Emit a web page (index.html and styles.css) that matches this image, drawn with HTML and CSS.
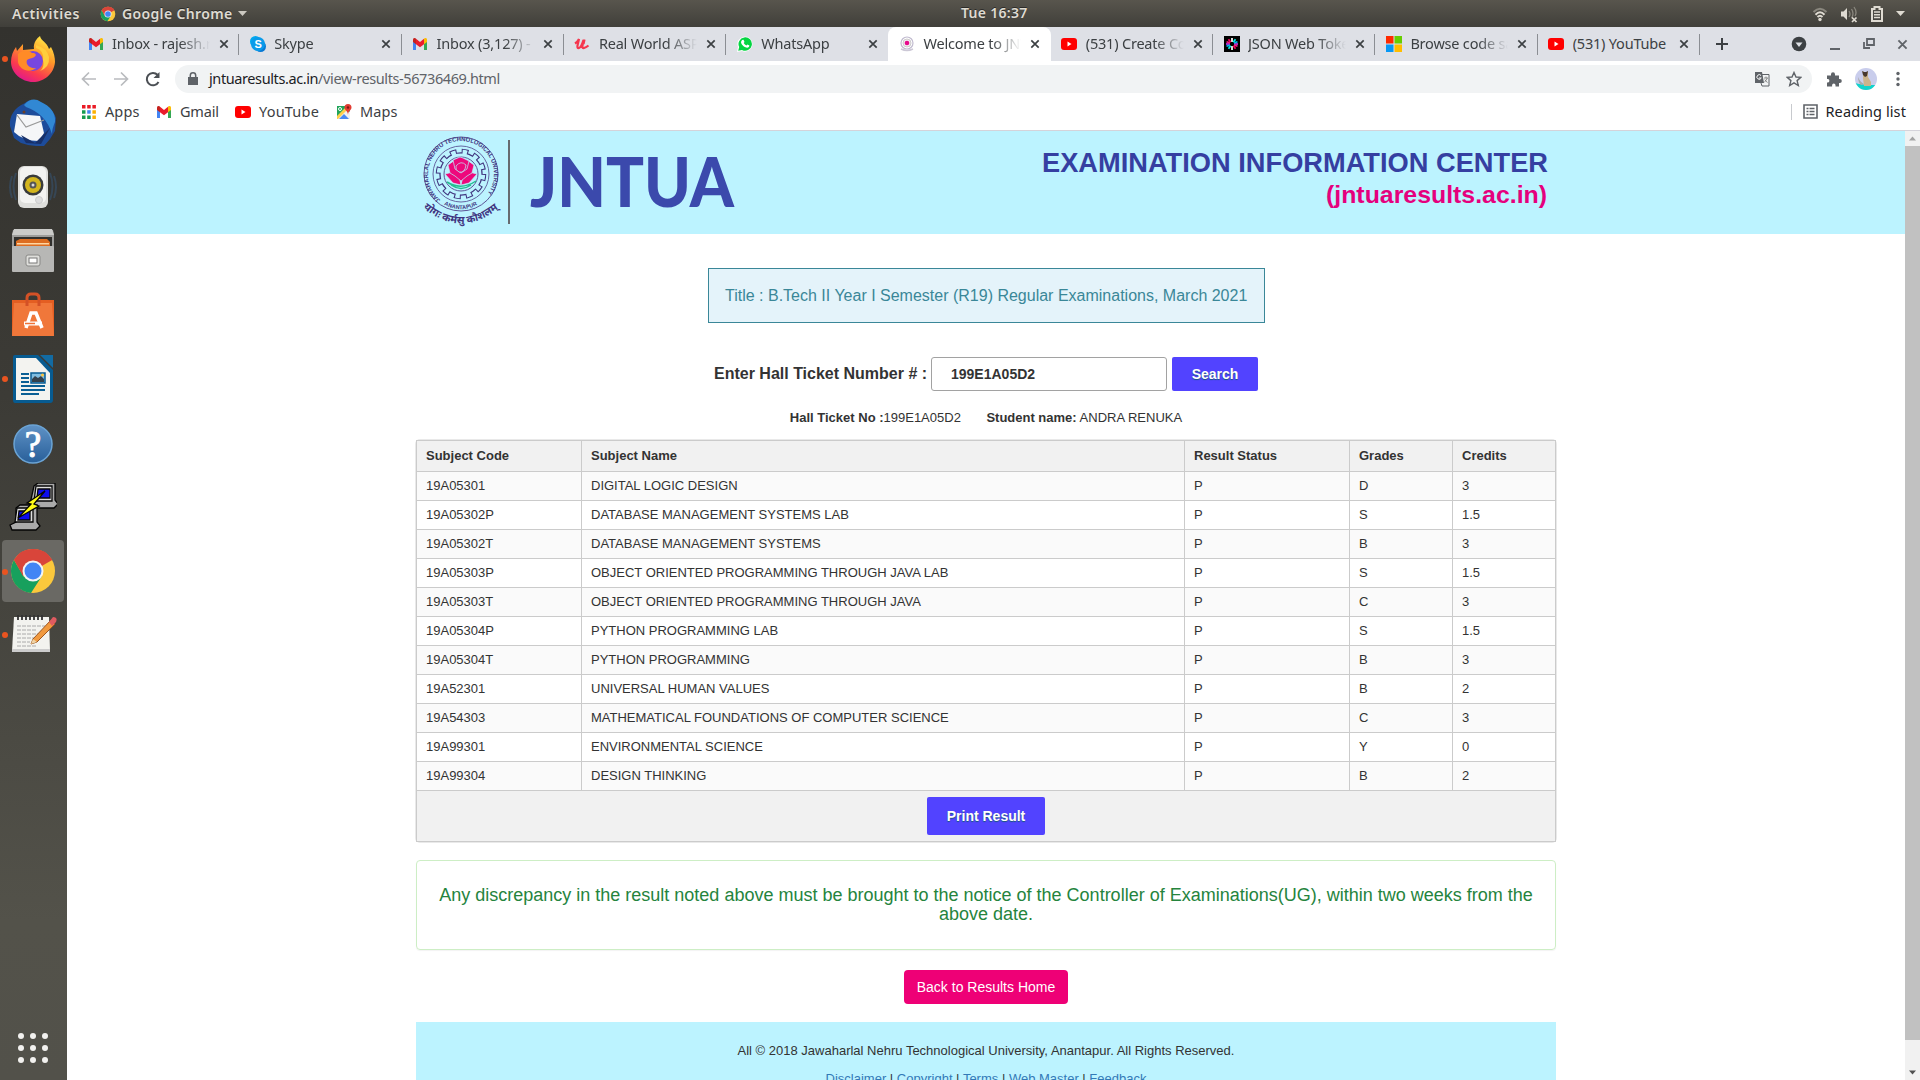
FILE: index.html
```html
<!DOCTYPE html>
<html lang="en">
<head>
<meta charset="utf-8">
<title>Welcome to JNTUA Results</title>
<link rel="stylesheet" href="styles.css">
</head>
<body>
<svg class="defs" width="0" height="0" aria-hidden="true">
  <symbol id="chrome" viewBox="0 0 48 48">
    <circle cx="24" cy="24" r="22" fill="#fbc83c"/>
    <path d="M24 24L5 13A22 22 0 0 1 43.200 13z" fill="#d9453a"/>
    <path d="M5 13A22 22 0 0 0 22 46L33 29 24 24 15 30z" fill="#17a05d"/>
    <path d="M5 13A22 22 0 0 1 43.200 13H24L14 29z" fill="#d9453a"/>
    <circle cx="24" cy="24" r="10.500" fill="#f4f4f4"/><circle cx="24" cy="24" r="8.500" fill="#4285f4"/>
  </symbol>
  <symbol id="gmail" viewBox="0 0 16 16">
    <path d="M1 3.500V14h3V6z" fill="#4285f4"/><path d="M12 6v8h3V3.500z" fill="#34a853"/>
    <path d="M1 3.500C1 2 2.600 1.500 4 2.500v5.700L1 6z" fill="#c5221f"/><path d="M15 3.500c0-1.500-1.600-2-3-1v5.700L15 6z" fill="#fbbc04"/>
    <path d="M4 2.700l4 3.200 4-3.200v5.500l-4 3-4-3z" fill="#ea1c2c"/>
  </symbol>
  <symbol id="youtube" viewBox="0 0 16 16"><rect y="2" width="16" height="12" rx="3" fill="#f00"/><path d="M6.500 5.500v5l4-2.500z" fill="#fff"/></symbol>
  <symbol id="close" viewBox="0 0 10 10"><path d="M1.300 1.300l7.400 7.400M8.700 1.300L1.300 8.700" stroke="currentColor" stroke-width="1.700"/></symbol>
</svg>

<header class="topbar">
  <div class="topbar-left">
    <span class="activities">Activities</span>
    <svg class="i16" viewBox="0 0 48 48"><use href="#chrome"/></svg>
    <span class="app-name">Google Chrome</span>
    <svg class="caret" width="9" height="5"><path d="M0 0h9L4.500 5z" fill="#ccc9c1"/></svg>
  </div>
  <span class="clock">Tue 16:37</span>
  <div class="topbar-right">
    <svg width="16" height="16" viewBox="0 0 16 16" fill="none" stroke-width="2"><path d="M1.500 6Q8-.500 14.500 6" stroke="#8a877e"/><path d="M3.500 8.700Q8 4 12.500 8.700" stroke="#dfdbd2"/><path d="M5.500 11Q8 8.500 10.500 11" stroke="#dfdbd2"/><circle cx="8" cy="13.500" r="1.700" fill="#dfdbd2"/></svg>
    <svg width="18" height="18" viewBox="0 0 18 18" fill="none"><path d="M1 6.500h2.500L7 3v12l-3.500-3.500H1z" fill="#dfdbd2"/><path d="M9 6q2 3 0 6M11.500 4q3 4.500 0 9M14 2q3.500 5 1 9" stroke="#8a877e" stroke-width="1.300"/><path d="M12 12.500l4.500 4.500m0-4.500L12 17" stroke="#dfdbd2" stroke-width="1.700"/></svg>
    <svg width="14" height="18" viewBox="0 0 14 18"><path d="M2 4h2.500V2h5v2H12v12H2z" fill="none" stroke="#dfdbd2" stroke-width="2"/><path d="M4 7h6M4 9.700h6M4 12.400h6" stroke="#dfdbd2" stroke-width="1.500"/></svg>
    <svg width="9" height="5"><path d="M0 0h9L4.500 5z" fill="#dfdbd2"/></svg>
  </div>
</header>

<div class="desktop">
<nav class="dock">
  <div class="slot running"><svg viewBox="0 0 48 48">
    <defs><linearGradient id="fx" x1=".8" y1="0" x2=".3" y2="1"><stop offset="0" stop-color="#fff04a"/><stop offset=".4" stop-color="#ff9a28"/><stop offset=".75" stop-color="#fb3b4e"/><stop offset="1" stop-color="#df1690"/></linearGradient></defs>
    <path d="M25 14C24 8 28 3 31 1c1 5 7 6 9 13l2-2c3 5 4 11 4 15-1 12-11 20-22 20S2 38 2 27c0-6 2-11 5-15l1 4 6-7 0 6z" fill="url(#fx)"/>
    <circle cx="24" cy="26" r="10" fill="#7747df"/><path d="M9 19c4-4 10-4 14-1 2 0 3 0 4 2-2 4-7 3-9 5-2 5 4 9 9 8-7 6-17 1-18-6z" fill="#ff8b27"/><path d="M27 13q8 2 7 12 2 7-3 11 10-4 9-14-2-9-13-12z" fill="#ffce3d"/></svg></div>
  <div class="slot"><svg viewBox="0 0 48 48"><path d="M24 1q-5 0-8 3C5 9 0 17 1 27l4 12 7 5 7 2 8 1h8l6-7 5-8 1-13Q42 5 24 1z" fill="#1d4c9b"/><path d="M15 6Q23-3 32 3q15 7 14 20-3 7-3 12-6-20-26-27z" fill="#3188d4"/><path d="M8 15l23 2 4 17-5 8q-16 0-25-9z" fill="#f5f6f8"/><path d="M8 16l9 12 18-7" fill="none" stroke="#999" stroke-width="1.200"/><path d="M12 36l14 8 15-15-9 16-15-1z" fill="#173069"/><circle cx="15" cy="13" r="1.500" fill="#6b3e27"/></svg></div>
  <div class="slot"><svg viewBox="0 0 48 48"><path d="M7 10q-5 13 0 27M3 13q-4 11 0 22M41 10q5 13 0 27M45 13q4 11 0 22" fill="none" stroke="#364655" stroke-width="2"/><rect x="9" y="3" width="30" height="42" rx="6" fill="#dededb"/><rect x="11" y="4" width="26" height="36" rx="5" fill="#f3f3f1"/><circle cx="24" cy="22" r="10.500" fill="#393b3b"/><circle cx="24" cy="22" r="8" fill="#d3b51d"/><circle cx="24" cy="22" r="3.500" fill="#555"/><circle cx="24" cy="22" r="1.500" fill="#ddd"/><circle cx="30" cy="37" r="3.500" fill="#ddd" stroke="#ccc"/></svg></div>
  <div class="slot"><svg viewBox="0 0 48 48"><path d="M4 3h40l1 5v36H3V8z" fill="#9d9d9b"/><path d="M5 2h38l2 6H3z" fill="#cbcbc9"/><path d="M5 10h38v10H5z" fill="#31302d"/><path d="M7 14l4-2h27l3 3v5H7z" fill="#dd6d21"/><path d="M8 16h32v1.500H8z" fill="#ffd6a2"/><rect x="3" y="19" width="42" height="26" rx="1" fill="#b7b7b5"/><rect x="17" y="28" width="14" height="11" rx="2" fill="#dededb" stroke="#898987"/><rect x="20" y="31" width="8" height="5" fill="#fff" stroke="#777"/></svg></div>
  <div class="slot"><svg viewBox="0 0 48 48"><path d="M3 9h42v36H3z" fill="#e45e22"/><path d="M5 12h38l2 33H3z" fill="#f0773a"/><path d="M18 15V7q0-4 4-4h4q4 0 4 4v8" fill="none" stroke="#d35126" stroke-width="3"/><path d="M17 37l5-15h5l6 15" fill="none" stroke="#fff" stroke-width="3.500"/><path d="M15 32.500h18" stroke="#fff" stroke-width="4"/><path d="M16 32.500h10" stroke="#ef7237" stroke-width="1.500"/></svg></div>
  <div class="slot running"><svg viewBox="0 0 48 48"><path d="M6 0h23l15 15v30q0 3-3 3H6q-2 0-2-3V2q0-2 2-2z" fill="#075b91"/><path d="M7 3h20l14 15v27H7z" fill="#f3f3f0"/><path d="M31 0h13v13z" fill="#126ba3"/><path d="M12 19h8M12 23h8M12 27h8M12 31h24M12 35h24M12 39h18" stroke="#0a5f95" stroke-width="2"/><path d="M22 18h14v10H22z" fill="#80bde0" stroke="#075b91" stroke-width="1.500"/><path d="M23 27v-3l3-3 3 2 3-2 3 3v3z" fill="#35414c"/><circle cx="33.500" cy="20" r="1.500" fill="#fdc43b"/></svg></div>
  <div class="slot"><svg viewBox="0 0 48 48"><defs><linearGradient id="help" x2="0" y2="1"><stop stop-color="#5f92c6"/><stop offset="1" stop-color="#285f99"/></linearGradient></defs><circle cx="24" cy="25" r="19" fill="url(#help)" stroke="#6ba4d5" stroke-width="1.500"/><text x="24" y="38" class="help-mark">?</text></svg></div>
  <div class="slot"><svg viewBox="0 0 48 48"><g stroke="#050505" stroke-width="1.300"><path d="M25 3l4-3h17v17l3 4-4 4H23l-2-4z" fill="#aaa"/><path d="M27 3h16v15H25z" fill="#ddd"/><path d="M29 6h12v9H28z" fill="#0c0cec"/><path d="M7 25l4-3h17v17l3 4-4 4H3l-2-5 6-3z" fill="#aaa"/><path d="M8 25h16v14H6z" fill="#ddd"/><path d="M10 28h11v9H9z" fill="#0c0cec"/><path d="M36 8L18 20l4 1-13 14 21-12-5-2z" fill="#fffb16"/></g></svg></div>
  <div class="slot running active"><svg viewBox="0 0 48 48"><use href="#chrome"/></svg></div>
  <div class="slot running"><svg viewBox="0 0 48 48"><path d="M5 6h35l1 34H3z" fill="#f3f3ef"/><path d="M3 38h38v3H3z" fill="#ccc"/><path d="M9 4v5m4-5v5m4-5v5m4-5v5m4-5v5m4-5v5m4-5v5" stroke="#333" stroke-width="1.800"/><path d="M8 15h28M8 19h20M8 23h25M8 27h17M8 31h13M8 35h20" stroke="#aaa" stroke-dasharray="4 1"/><path d="M24 28L42 9l4 4-18 18-6 2z" fill="#f19a3f" stroke="#9d5721"/><path d="M40 11l4-5q5 0 3 5l-4 4z" fill="#df5b61"/><path d="M22 33l2-5 4 3z" fill="#f0d4a5"/></svg></div>
  <div class="slot apps"><svg viewBox="0 0 48 48" fill="#f2f1ef"><circle cx="12" cy="12" r="3"/><circle cx="24" cy="12" r="3"/><circle cx="36" cy="12" r="3"/><circle cx="12" cy="24" r="3"/><circle cx="24" cy="24" r="3"/><circle cx="36" cy="24" r="3"/><circle cx="12" cy="36" r="3"/><circle cx="24" cy="36" r="3"/><circle cx="36" cy="36" r="3"/></svg></div>
</nav>

<main class="browser">
  <div class="tabs">
    <div class="tab"><svg class="i16"><use href="#gmail"/></svg><span>Inbox - rajesh.r</span><svg class="x"><use href="#close"/></svg></div>
    <div class="tab"><svg class="i16" viewBox="0 0 16 16"><circle cx="5.500" cy="5.500" r="5.500" fill="#00a9ef"/><circle cx="10.500" cy="10.500" r="5.500" fill="#0878d4"/><circle cx="8" cy="8" r="7" fill="#0a9bea"/><text x="8" y="12" class="skype-s">S</text></svg><span>Skype</span><svg class="x"><use href="#close"/></svg></div>
    <div class="tab"><svg class="i16"><use href="#gmail"/></svg><span>Inbox (3,127) - r</span><svg class="x"><use href="#close"/></svg></div>
    <div class="tab"><svg class="i16" viewBox="0 0 16 16" fill="none" stroke="#f5374e" stroke-width="2.200"><path d="M1 7.500Q3.500 6 5 3L3.500 9.500Q3 12.500 5 12T9.500 4L8.500 9.500Q8 12.500 10 12T14.500 9.500M10.500 3.500L9.500 8"/></svg><span>Real World ASP</span><svg class="x"><use href="#close"/></svg></div>
    <div class="tab before-active"><svg class="i16" viewBox="0 0 16 16"><path d="M0 16l1-5A7.500 7.500 0 1 1 5 15z" fill="#fff"/><path d="M1.200 14.800l1-3.800A6.700 6.700 0 1 1 5 13.900z" fill="#05d542"/><path d="M5 4l1.500-.3 1 2.300-.8 1q1 1.800 2.700 2.400l1-1 2 1q0 2-2 2.300C7 11.700 4 8 4 6z" fill="#fff"/></svg><span>WhatsApp</span><svg class="x"><use href="#close"/></svg></div>
    <div class="tab current"><svg class="i16" viewBox="0 0 16 16"><circle cx="8" cy="7" r="6" fill="#fff" stroke="#c1bbcf" stroke-width="1.200"/><circle cx="8" cy="7" r="4" fill="#f4e6ef" stroke="#ccc"/><circle cx="8" cy="7" r="2.300" fill="#e60b8b"/><path d="M2 13q6 3 12 0" fill="none" stroke="#ccc8d6" stroke-width="1.500"/></svg><span>Welcome to JNT</span><svg class="x"><use href="#close"/></svg></div>
    <div class="tab"><svg class="i16"><use href="#youtube"/></svg><span>(531) Create Co</span><svg class="x"><use href="#close"/></svg></div>
    <div class="tab"><svg class="i16" viewBox="0 0 16 16"><path d="M0 0h16v16H0z"/><g stroke-width="1.700"><path d="M8 2v4M8 10v4" stroke="#fff"/><path d="M2 8h4M10 8h4" stroke="#d63aff"/><path d="M4.500 3.200l2.200 3.100M9.300 9.700l2.200 3.100" stroke="#fb015b"/><path d="M11.500 3.200L9.300 6.300M6.700 9.700l-2.200 3.100" stroke="#00f2e6"/><path d="M2.500 5.800l3.300 1.100M10.200 9.100l3.300 1.100" stroke="#f31b7b"/><path d="M13.500 5.800l-3.300 1.100M5.800 9.100l-3.300 1.100" stroke="#00b9f1"/></g></svg><span>JSON Web Toke</span><svg class="x"><use href="#close"/></svg></div>
    <div class="tab"><svg class="i16" viewBox="0 0 16 16"><path d="M0 0h7.500v7.500H0z" fill="#ff2a00"/><path d="M8.500 0H16v7.500H8.500z" fill="#66ce00"/><path d="M0 8.500h7.500V16H0z" fill="#0798f5"/><path d="M8.500 8.500H16V16H8.500z" fill="#ffbd00"/></svg><span>Browse code sa</span><svg class="x"><use href="#close"/></svg></div>
    <div class="tab"><svg class="i16"><use href="#youtube"/></svg><span class="full">(531) YouTube</span><svg class="x"><use href="#close"/></svg></div>
    <svg class="plus" width="14" height="14"><path d="M7 1v12M1 7h12" stroke="#3c4043" stroke-width="2"/></svg>
    <div class="window-buttons">
      <svg width="16" height="16"><circle cx="8" cy="8" r="7.300" fill="#3c4043"/><path d="M4.500 6.500h7L8 11z" fill="#dee1e6"/></svg>
      <svg width="12" height="14"><path d="M1 12h10" stroke="#5f6368" stroke-width="2"/></svg>
      <svg width="12" height="12" fill="none" stroke="#5f6368" stroke-width="1.800"><path d="M4 1h7v6H4zM1 4v6h6"/></svg>
      <svg width="11" height="11" viewBox="0 0 10 10" class="window-close"><use href="#close"/></svg>
    </div>
  </div>

  <div class="toolbar">
    <svg class="nav" viewBox="0 0 16 16"><path d="M15 8H2M8 1.500L1.500 8 8 14.500"/></svg>
    <svg class="nav" viewBox="0 0 16 16"><path d="M1 8h13M8 1.500L14.500 8 8 14.500"/></svg>
    <svg class="nav reload" viewBox="0 0 16 16"><path d="M13.500 11A6.200 6.200 0 1 1 12.500 3.800"/><path d="M14.500 1v6h-6z" fill="#4b4f54" stroke="none"/></svg>
    <div class="omnibox">
      <svg width="10" height="13" viewBox="0 0 10 13"><path d="M0 5h10v8H0z" fill="#5f6368"/><path d="M2.300 6V3.500a2.700 2.700 0 0 1 5.400 0V6" fill="none" stroke="#5f6368" stroke-width="1.500"/></svg>
      <span class="url"><b>jntuaresults.ac.in</b>/view-results-56736469.html</span>
      <svg class="i16" viewBox="0 0 16 16"><path d="M1 1h7l2 11H1z" fill="#5f6368"/><path d="M8 3.500h7V15H8l-1-3" fill="none" stroke="#5f6368"/><path d="M7 4.500a2.300 2.300 0 1 0 .3 2.500H5" fill="none" stroke="#fff"/><path d="M10 7h4M12 5.500V7M13.300 7q-1 3-3 4M10.800 8.500q1 2 2.800 3" fill="none" stroke="#777" stroke-width=".8"/></svg>
      <svg class="i16" viewBox="0 0 16 16"><path d="M8 1.500l2 4.500 4.800.4-3.700 3.200 1.200 4.900L8 11.900l-4.300 2.600 1.200-4.900L1.200 6.400 6 6z" fill="none" stroke="#5f6368" stroke-width="1.400"/></svg>
    </div>
    <svg class="i16" viewBox="0 0 16 16"><path d="M1 4.500h4V3.300a2 2 0 0 1 4 0v1.200h4V8h.800a2 2 0 0 1 0 4H13v3.500H9.500v-1.200a1.700 1.700 0 0 0-3.400 0v1.200H1v-4h1a1.800 1.800 0 0 0 0-3.500H1z" fill="#5f6368"/></svg>
    <svg class="avatar" viewBox="0 0 22 22"><defs><clipPath id="round"><circle cx="11" cy="11" r="11"/></clipPath></defs><g clip-path="url(#round)"><path d="M0 0h22v22H0z" fill="#c9cdec"/><path d="M0 15q7 2 22 2v5H0z" fill="#12d4cc"/><path d="M3 9q2 5 6 7l-3 1q-3-3-3-8z" fill="#aaa"/><path d="M8 3l2 2h2l1-2v6l3 5v4H9l-1-8z" fill="#cbb48c"/><path d="M7 3l2 1h2l2-1-1 5-2 1-2-2z" fill="#47382e"/></g></svg>
    <svg width="4" height="16"><g fill="#5f6368"><circle cx="2" cy="2.500" r="1.700"/><circle cx="2" cy="8" r="1.700"/><circle cx="2" cy="13.500" r="1.700"/></g></svg>
  </div>

  <div class="bookmarks">
    <svg width="14" height="14" viewBox="0 0 14 14"><g fill="#ea1b25"><path d="M0 0h3.500v3.500H0zM5.200 0h3.500v3.500H5.200zM10.400 0h3.500v3.500h-3.500z"/></g><path d="M0 5.200h3.500v3.500H0zM0 10.400h3.500v3.500H0zM5.200 10.400h3.500v3.500H5.200z" fill="#159c50"/><path d="M5.200 5.200h3.500v3.500H5.200z" fill="#4285f4"/><path d="M10.400 5.200h3.500v3.500h-3.500zM10.400 10.400h3.500v3.500h-3.500z" fill="#fbb000"/></svg><span class="bm-apps">Apps</span>
    <svg class="i16"><use href="#gmail"/></svg><span class="bm-gmail">Gmail</span>
    <svg class="i16"><use href="#youtube"/></svg><span class="bm-youtube">YouTube</span>
    <svg class="i16" viewBox="0 0 16 16"><path d="M1 2h13v13H1z" fill="#22a45a"/><path d="M1 15L11 5l3 3v7z" fill="#f1f1f1"/><path d="M3 15l5-5 5 5z" fill="#4a8af4"/><path d="M1 12L11 2l2 2L2 15H1z" fill="#ffd04c"/><path d="M12 0a3.500 3.500 0 0 1 3.500 3.500C15.500 6 12 7 12 11c0-4-3.500-5-3.500-7.500A3.500 3.500 0 0 1 12 0z" fill="#e23c32"/><circle cx="12" cy="3.500" r="1.200" fill="#811a15"/><circle cx="4" cy="5" r="1.500" fill="none" stroke="#fff"/></svg><span>Maps</span>
    <div class="reading"><svg width="15" height="15" viewBox="0 0 15 15"><path d="M1 1h13v13H1z" fill="none" stroke="#5f6368" stroke-width="1.600"/><path d="M3.500 4.500h2M3.500 7.500h2M3.500 10.500h2M6.500 4.500h5M6.500 7.500h5M6.500 10.500h5" stroke="#5f6368" stroke-width="1.300"/></svg><span>Reading list</span></div>
  </div>

  <div class="viewport">
    <div class="page">
      <div class="banner"><div class="container banner-row">
        <svg width="330" height="103" viewBox="0 0 330 103">
          <defs><path id="ring" d="M24.500 68.900A33 33 0 1 1 65.500 68.900"/><path id="ring-low" d="M28 73.500Q45 83 62 73.500"/><path id="motto-arc" d="M7 77Q45 108 83 77"/></defs>
          <circle cx="45" cy="43" r="37" fill="none" stroke="#5b5596"/>
          <circle cx="45" cy="43" r="28" fill="none" stroke="#5b5596" stroke-width=".9"/>
          <!-- twelve-tooth cog -->
          <g fill="none"><circle cx="45" cy="43" r="22" stroke="#40357f" stroke-width="6.500" stroke-dasharray="6.500 5.020"/><circle cx="45" cy="43" r="20.500" stroke="#40357f" stroke-width="2.400"/><circle cx="45" cy="43" r="22" stroke="#bcf3ff" stroke-width="4.400" stroke-dasharray="4.500 7.020" stroke-dashoffset="-1"/><circle cx="45" cy="43" r="18.200" stroke="#bcf3ff" stroke-width="4.400"/><circle cx="45" cy="43" r="17" stroke="#5b5596"/></g>
          <text class="ring-text"><textPath href="#ring" textLength="154">JAWAHARLAL NEHRU TECHNOLOGICAL UNIVERSITY</textPath></text>
          <text class="ring-text low"><textPath href="#ring-low" textLength="35">ANANTAPUR</textPath></text>
          <g fill="#ee087c" stroke="#bcf3ff" stroke-width=".7"><path d="M29 43l8-2 6 4 2 9-8-2z"/><path d="M61 43l-8-2-6 4-2 9 8-2z"/><path d="M32 34l7-5 6 2 6-2 7 5-2 8-5 3-6 5-6-5-5-3z"/><path d="M37 29l7-3 3 1 6 3-2 8-6 4-6-4z"/><path d="M40 35q5-6 10-1-1 8-7 7-4-2-3-6z"/></g>
          <path d="M31 51q14 9 29-1M35 54q10 7 20 0" fill="none" stroke="#24bd91" stroke-width="1.500"/>
          <text class="motto"><textPath href="#motto-arc" textLength="83">योगः कर्मसु कौशलम्</textPath></text>
          <path d="M93 9v84" stroke="#666b70" stroke-width="2"/>
          <text class="brand" x="114" y="75.500" textLength="204" lengthAdjust="spacingAndGlyphs">JNTUA</text>
        </svg>
        <svg width="530" height="103" viewBox="0 0 530 103">
          <text class="eic" x="16" y="41" textLength="506" lengthAdjust="spacingAndGlyphs">EXAMINATION INFORMATION CENTER</text>
          <text class="site" x="300" y="72" textLength="221" lengthAdjust="spacingAndGlyphs">(jntuaresults.ac.in)</text>
        </svg>
      </div></div>
      <div class="container content">
        <div class="title-box">Title : B.Tech II Year I Semester (R19) Regular Examinations, March 2021</div>
        <form class="search"><label for="ht">Enter Hall Ticket Number # :</label><input id="ht" value="199E1A05D2"><button type="button" class="btn">Search</button></form>
        <div class="student"><span><b>Hall Ticket No :</b>199E1A05D2</span><span><b>Student name:</b> ANDRA RENUKA</span></div>
        <table>
          <colgroup><col class="c-code"><col class="c-name"><col class="c-code"><col class="c-small"><col class="c-small"></colgroup>
          <thead><tr><th>Subject Code</th><th>Subject Name</th><th>Result Status</th><th>Grades</th><th>Credits</th></tr></thead>
          <tbody>
            <tr><td>19A05301</td><td>DIGITAL LOGIC DESIGN</td><td>P</td><td>D</td><td>3</td></tr>
            <tr><td>19A05302P</td><td>DATABASE MANAGEMENT SYSTEMS LAB</td><td>P</td><td>S</td><td>1.5</td></tr>
            <tr><td>19A05302T</td><td>DATABASE MANAGEMENT SYSTEMS</td><td>P</td><td>B</td><td>3</td></tr>
            <tr><td>19A05303P</td><td>OBJECT ORIENTED PROGRAMMING THROUGH JAVA LAB</td><td>P</td><td>S</td><td>1.5</td></tr>
            <tr><td>19A05303T</td><td>OBJECT ORIENTED PROGRAMMING THROUGH JAVA</td><td>P</td><td>C</td><td>3</td></tr>
            <tr><td>19A05304P</td><td>PYTHON PROGRAMMING LAB</td><td>P</td><td>S</td><td>1.5</td></tr>
            <tr><td>19A05304T</td><td>PYTHON PROGRAMMING</td><td>P</td><td>B</td><td>3</td></tr>
            <tr><td>19A52301</td><td>UNIVERSAL HUMAN VALUES</td><td>P</td><td>B</td><td>2</td></tr>
            <tr><td>19A54303</td><td>MATHEMATICAL FOUNDATIONS OF COMPUTER SCIENCE</td><td>P</td><td>C</td><td>3</td></tr>
            <tr><td>19A99301</td><td>ENVIRONMENTAL SCIENCE</td><td>P</td><td>Y</td><td>0</td></tr>
            <tr><td>19A99304</td><td>DESIGN THINKING</td><td>P</td><td>B</td><td>2</td></tr>
          </tbody>
          <tfoot><tr><td colspan="5"><button type="button" class="btn print">Print Result</button></td></tr></tfoot>
        </table>
        <div class="notice">Any discrepancy in the result noted above must be brought to the notice of the Controller of Examinations(UG), within two weeks from the above date.</div>
        <a class="back">Back to Results Home</a>
        <footer>
          <p>All © 2018 Jawaharlal Nehru Technological University, Anantapur. All Rights Reserved.</p>
          <p><a>Disclaimer</a> | <a>Copyright</a> | <a>Terms</a> | <a>Web Master</a> | <a>Feedback</a></p>
        </footer>
      </div>
    </div>
    <div class="scrollbar">
      <svg width="15" height="15"><path d="M4 9.500h7L7.500 5.500z" fill="#a3a3a3"/></svg>
      <div class="thumb"></div>
      <svg width="15" height="15"><path d="M4 5.500h7L7.500 9.500z" fill="#505050"/></svg>
    </div>
  </div>
</main>
</div>
</body>
</html>
```
FILE: styles.css
```css
* { box-sizing: border-box; }
body { margin: 0; width: 1920px; height: 1080px; overflow: hidden; display: flex; flex-direction: column; font-family: "Noto Sans", "Open Sans", sans-serif; background: #fff; }
.defs { display: none; }
svg { flex: none; display: block; }
.i16 { width: 16px; height: 16px; }

/* desktop panel */
.topbar { flex: none; height: 27px; display: grid; grid-template-columns: 961px auto 1fr; align-items: center; padding-right: 15px; background: linear-gradient(#58554d, #403f3a); color: #dfdbd2; font-size: 14px; font-weight: 600; line-height: 25px; text-shadow: 0 -1px #2c2b28; }
.topbar-left { display: flex; align-items: center; padding-left: 12px; }
.activities { width: 88px; letter-spacing: .55px; }
.app-name { margin-left: 6px; width: 116px; letter-spacing: .35px; white-space: nowrap; }
.clock { white-space: nowrap; letter-spacing: .3px; padding-bottom: 2px; }
.topbar-right { display: flex; align-items: center; justify-content: flex-end; gap: 12px; }

.desktop { flex: 1; min-height: 0; display: flex; }
.dock { width: 67px; display: flex; flex-direction: column; background: linear-gradient(#33322e, #3c3b36 35%, #53524a 85%, #52514a); }
.slot { position: relative; height: 64px; flex: none; padding: 8px 10px 8px 9px; }
.slot svg { width: 48px; height: 48px; }
.running::before { content: ""; position: absolute; left: 2px; top: 29px; width: 6px; height: 6px; border-radius: 50%; background: #e95420; }
.active { width: 62px; height: 62px; margin: 1px 0 1px 2px; padding: 7px; background: #6a6964; border-radius: 4px; }
.active::before { left: 0; }
.apps { margin-top: auto; }
.help-mark { font: 37px "Liberation Serif", serif; fill: #fff; stroke: #fff; text-anchor: middle; }

/* browser frame */
.browser { flex: 1; min-width: 0; display: flex; flex-direction: column; }
.tabs { flex: none; height: 34px; display: flex; align-items: center; padding-left: 10px; background: #dee0e6; color: #3c4043; }
.tab { position: relative; width: 162.300px; height: 34px; flex: none; display: flex; align-items: center; padding: 0 10.500px 0 10.500px; font-size: 14.500px; letter-spacing: -.2px; }
.tab::after { content: ""; position: absolute; right: 0; top: 7px; width: 1px; height: 21px; background: #8b8e93; }
.tab span { margin: 0 0 2px 8.500px; width: 100px; overflow: hidden; white-space: nowrap; line-height: 24px; mask-image: linear-gradient(90deg, #000 68%, transparent 98%); }
.tab span.full { mask-image: none; }
.tab .x { width: 10px; height: 10px; margin-left: auto; }
.tab.current { background: #fff; border-radius: 8px 8px 0 0; }
.tab.current::after, .before-active::after { display: none; }
.plus { margin-left: 15px; }
.window-buttons { margin: 0 12px 0 auto; display: flex; align-items: center; gap: 22px; color: #5f6368; }
.skype-s { font: bold 11px "Liberation Sans", sans-serif; fill: #fff; text-anchor: middle; }
.toolbar { flex: none; height: 37px; display: flex; align-items: center; padding: 0 20px 2px 14px; }
.nav { width: 16px; height: 16px; margin-right: 16px; fill: none; stroke: #b9bbbe; stroke-width: 1.700; }
.reload { stroke: #4b4f54; stroke-width: 2; margin-right: 14px; }
.omnibox { height: 28px; flex: 1; margin-right: 14px; padding: 0 10px 0 13px; display: flex; align-items: center; gap: 16px; background: #f1f3f4; border-radius: 14px; }
.url { flex: 1; margin: 0 0 2px -5px; color: #5f6368; font-size: 14.500px; letter-spacing: -.4px; }
.url b { font-weight: 400; color: #202124; }
.avatar { width: 22px; height: 22px; margin: 0 19px 0 13px; }
.bookmarks { flex: none; height: 33px; display: flex; align-items: center; padding: 0 14px 5px 15px; border-bottom: 1px solid #d5d3da; color: #3c4043; font-size: 14.500px; letter-spacing: .1px; }
.bookmarks span { padding-bottom: 2px; }
.bookmarks > span { margin-left: 8px; white-space: nowrap; }
.bookmarks > .bm-apps { margin-left: 9px; width: 51px; }
.bookmarks > .bm-gmail { width: 55px; letter-spacing: -.2px; }
.bookmarks > .bm-youtube { width: 77px; letter-spacing: .2px; }
.reading { margin-left: auto; display: flex; align-items: center; gap: 8px; padding-left: 11px; border-left: 1px solid #c8cace; height: 16px; color: #202124; white-space: nowrap; }

/* results page */
.viewport { flex: 1; min-height: 0; display: flex; font-family: "Liberation Sans", Arial, sans-serif; font-size: 13px; color: #333; }
.page { flex: 1; overflow: hidden; }
.banner { height: 103px; background: #bcf3ff; }
.container { width: 1140px; margin: 0 auto; }
.banner-row { display: flex; justify-content: space-between; }
.ring-text { font: bold 6px "Liberation Sans", sans-serif; fill: #40357f; }
.ring-text.low { font-size: 5.500px; }
.motto { font: bold 10.500px "Noto Sans", sans-serif; fill: #40357f; }
.brand { font: 900 68px Lato, sans-serif; fill: #3b49ac; }
.eic { font: bold 27px "Liberation Sans", sans-serif; fill: #353fa1; }
.site { font: bold 24.500px "Liberation Sans", sans-serif; fill: #e5007d; }
.content { display: flex; flex-direction: column; align-items: center; }
.title-box { margin: 34px 0 0 1px; width: 557px; height: 55px; padding: 17px 0 0 16px; border: 1px solid #3a8798; background: #e4f3fa; color: #3a8798; font-size: 16px; line-height: 20px; white-space: nowrap; }
.search { margin: 34px 0 0; display: flex; align-items: center; height: 34px; }
.search label { width: 217px; font-size: 16px; font-weight: bold; white-space: nowrap; }
.search input { width: 236px; height: 34px; padding: 0 19px; border: 1px solid #a2a2a2; border-radius: 3px; font: bold 14px "Liberation Sans", sans-serif; color: #333; }
.btn { width: 86px; height: 34px; margin-left: 5px; padding: 0; border: 0; border-radius: 2px; background: #5243ff; color: #fff; font: bold 14px "Liberation Sans", sans-serif; text-shadow: 0 1px 1px #1b5878; }
.btn.print { width: 118px; height: 38px; display: block; margin: 0 auto; }
.student { margin-top: 19px; height: 16px; line-height: 16px; display: flex; gap: 25.500px; }
table { margin-top: 14px; width: 1140px; table-layout: fixed; border-collapse: collapse; box-shadow: 0 0 0 1px #e9e9e9; border-radius: 4px; }
.c-code { width: 165px; }
.c-name { width: 603px; }
.c-small { width: 103px; }
th, td { height: 29px; padding: 0 9px 2px; border: 1px solid #cbcbcb; text-align: left; line-height: 15px; }
th { height: 31px; background: #f1f1f1; }
tbody tr:nth-child(odd) { background: #fafafa; }
tfoot td { height: 51px; padding-bottom: 0; background: #f1f1f1; }
.notice { margin-top: 18px; width: 1140px; height: 90px; padding: 25px 20px; border: 1px solid #cdeec5; border-radius: 4px; color: #25843d; font-size: 18px; line-height: 19px; text-align: center; box-shadow: 0 1px 1px rgba(0,0,0,.05); }
.back { margin-top: 20px; width: 164px; height: 34px; border-radius: 4px; background: #ee0076; color: #fff; font-size: 14px; line-height: 34px; text-align: center; }
footer { margin-top: 18px; width: 1140px; height: 100px; padding-top: 21px; background: #bcf3ff; text-align: center; }
footer p { margin: 0 0 12px; line-height: 16px; }
footer a { color: #3379b7; }
.scrollbar { width: 15px; background: #f1f1f1; display: flex; flex-direction: column; }
.thumb { height: 894px; background: #c1c1c1; }
.scrollbar svg:last-child { margin-top: auto; }
```
